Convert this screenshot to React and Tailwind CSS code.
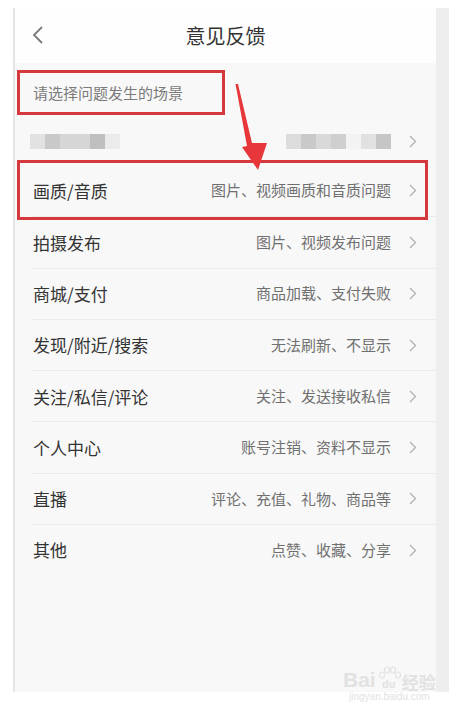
import React from "react";

const rows = [
  { title: "画质/音质", desc: "图片、视频画质和音质问题" },
  { title: "拍摄发布", desc: "图片、视频发布问题" },
  { title: "商城/支付", desc: "商品加载、支付失败" },
  { title: "发现/附近/搜索", desc: "无法刷新、不显示" },
  { title: "关注/私信/评论", desc: "关注、发送接收私信" },
  { title: "个人中心", desc: "账号注销、资料不显示" },
  { title: "直播", desc: "评论、充值、礼物、商品等" },
  { title: "其他", desc: "点赞、收藏、分享" },
];

const Chevron = () => (
  <svg width="8" height="13" viewBox="0 0 8 13" className="shrink-0">
    <path d="M1 1 L6.5 6.5 L1 12" fill="none" stroke="#b0b0b0" strokeWidth="1.3" />
  </svg>
);

// mosaic blocks standing in for the pixelated row
const Mosaic = ({ cells }) => (
  <div className="flex h-[15px]">
    {cells.map((c, i) => (
      <div key={i} className="h-full" style={{ width: c[0], background: c[1] }} />
    ))}
  </div>
);

export default function App() {
  return (
    <div
      className="relative w-[461px] h-[723px] bg-white overflow-hidden"
      style={{ fontFamily: '"Noto Sans CJK SC", "Noto Sans", sans-serif' }}
    >
      <div className="ml-[13px] pt-[8px] flex w-[436px] h-[692px]">
        <div className="flex flex-col flex-1 bg-[#f8f8f8] border-l-2 border-[#e4e4e4]">
          {/* header */}
          <div className="relative h-[55px] bg-[#fefefe] flex items-center justify-center">
            <svg width="12" height="18" viewBox="0 0 12 18" className="absolute left-[17px] top-[18px]">
              <path d="M10 1 L2 9 L10 17" fill="none" stroke="#7a7a7a" strokeWidth="1.8" />
            </svg>
            <span className="text-[20px] text-[#333]">意见反馈</span>
          </div>

          {/* section label */}
          <div className="h-[55px] pl-[18px] pt-[20px] text-[15px] leading-[20px] text-[#7a7a7a]">
            请选择问题发生的场景
          </div>

          {/* pixelated row */}
          <div className="h-[47px] flex items-center justify-between pl-[15px] pr-[19px]">
            <Mosaic
              cells={[
                [15, "#e2e2e2"],
                [15, "#c9c9c9"],
                [30, "#d6d6d6"],
                [15, "#bfbfbf"],
                [15, "#ebebeb"],
              ]}
            />
            <div className="flex items-center">
              <Mosaic
                cells={[
                  [15, "#dcdcdc"],
                  [15, "#c9c9c9"],
                  [15, "#d9d9d9"],
                  [15, "#cfcfcf"],
                  [15, "#f3f3f3"],
                  [15, "#e1e1e1"],
                  [15, "#c6c6c6"],
                ]}
              />
              <div className="ml-[18px]">
                <Chevron />
              </div>
            </div>
          </div>

          {/* scene list */}
          <div className="ml-[17px]">
            {rows.map((r, i) => (
              <div
                key={r.title}
                className={`h-[51.3px] flex items-center justify-between pl-[1px] pr-[19px] ${
                  i === 0 ? "" : "border-t border-[#ececec]"
                }`}
              >
                <span className="text-[17px] text-[#333]">{r.title}</span>
                <div className="flex items-center gap-[18px]">
                  <span className="text-[15px] text-[#707070]">{r.desc}</span>
                  <Chevron />
                </div>
              </div>
            ))}
          </div>
        </div>
        <div className="w-[13px] bg-[#eeeeee]" />
      </div>

      {/* annotation boxes */}
      <div className="absolute left-[17px] top-[70px] w-[208px] h-[45px] border-[3px] border-[#d6393d]" />
      <div className="absolute left-[17px] top-[160px] w-[411px] h-[60px] border-[3px] border-[#d6393d]" />

      {/* annotation arrow */}
      <svg className="absolute left-0 top-0" width="461" height="723" viewBox="0 0 461 723">
        <polygon
          points="235.5,84 238,84 252,143 267,143 258,170 242,147 247,146"
          fill="#e8373b"
        />
      </svg>

      {/* watermark */}
      <div className="absolute left-[343px] top-[666px] flex flex-col items-center text-[#e2e2e2]">
        <div className="flex items-end leading-none">
          <span className="text-[21px] font-bold" style={{ fontFamily: '"Liberation Sans", sans-serif' }}>
            Bai
          </span>
          <span className="relative mx-[1px] w-[24px] h-[24px] flex items-end justify-center">
            <svg className="absolute top-0 left-0" width="24" height="14" viewBox="0 0 24 14">
              <ellipse cx="5" cy="9" rx="2.5" ry="3" fill="none" stroke="#e2e2e2" strokeWidth="1.2" />
              <ellipse cx="10" cy="4" rx="2.5" ry="3" fill="none" stroke="#e2e2e2" strokeWidth="1.2" />
              <ellipse cx="16" cy="4" rx="2.5" ry="3" fill="none" stroke="#e2e2e2" strokeWidth="1.2" />
              <ellipse cx="21" cy="9" rx="2.5" ry="3" fill="none" stroke="#e2e2e2" strokeWidth="1.2" />
            </svg>
            <span className="text-[11px] font-bold" style={{ fontFamily: '"Liberation Sans", sans-serif' }}>
              du
            </span>
          </span>
          <span className="text-[17px] font-bold">经验</span>
        </div>
        <span className="text-[10px] leading-[14px]" style={{ fontFamily: '"Liberation Sans", sans-serif' }}>
          jingyan.baidu.com
        </span>
      </div>
    </div>
  );
}
